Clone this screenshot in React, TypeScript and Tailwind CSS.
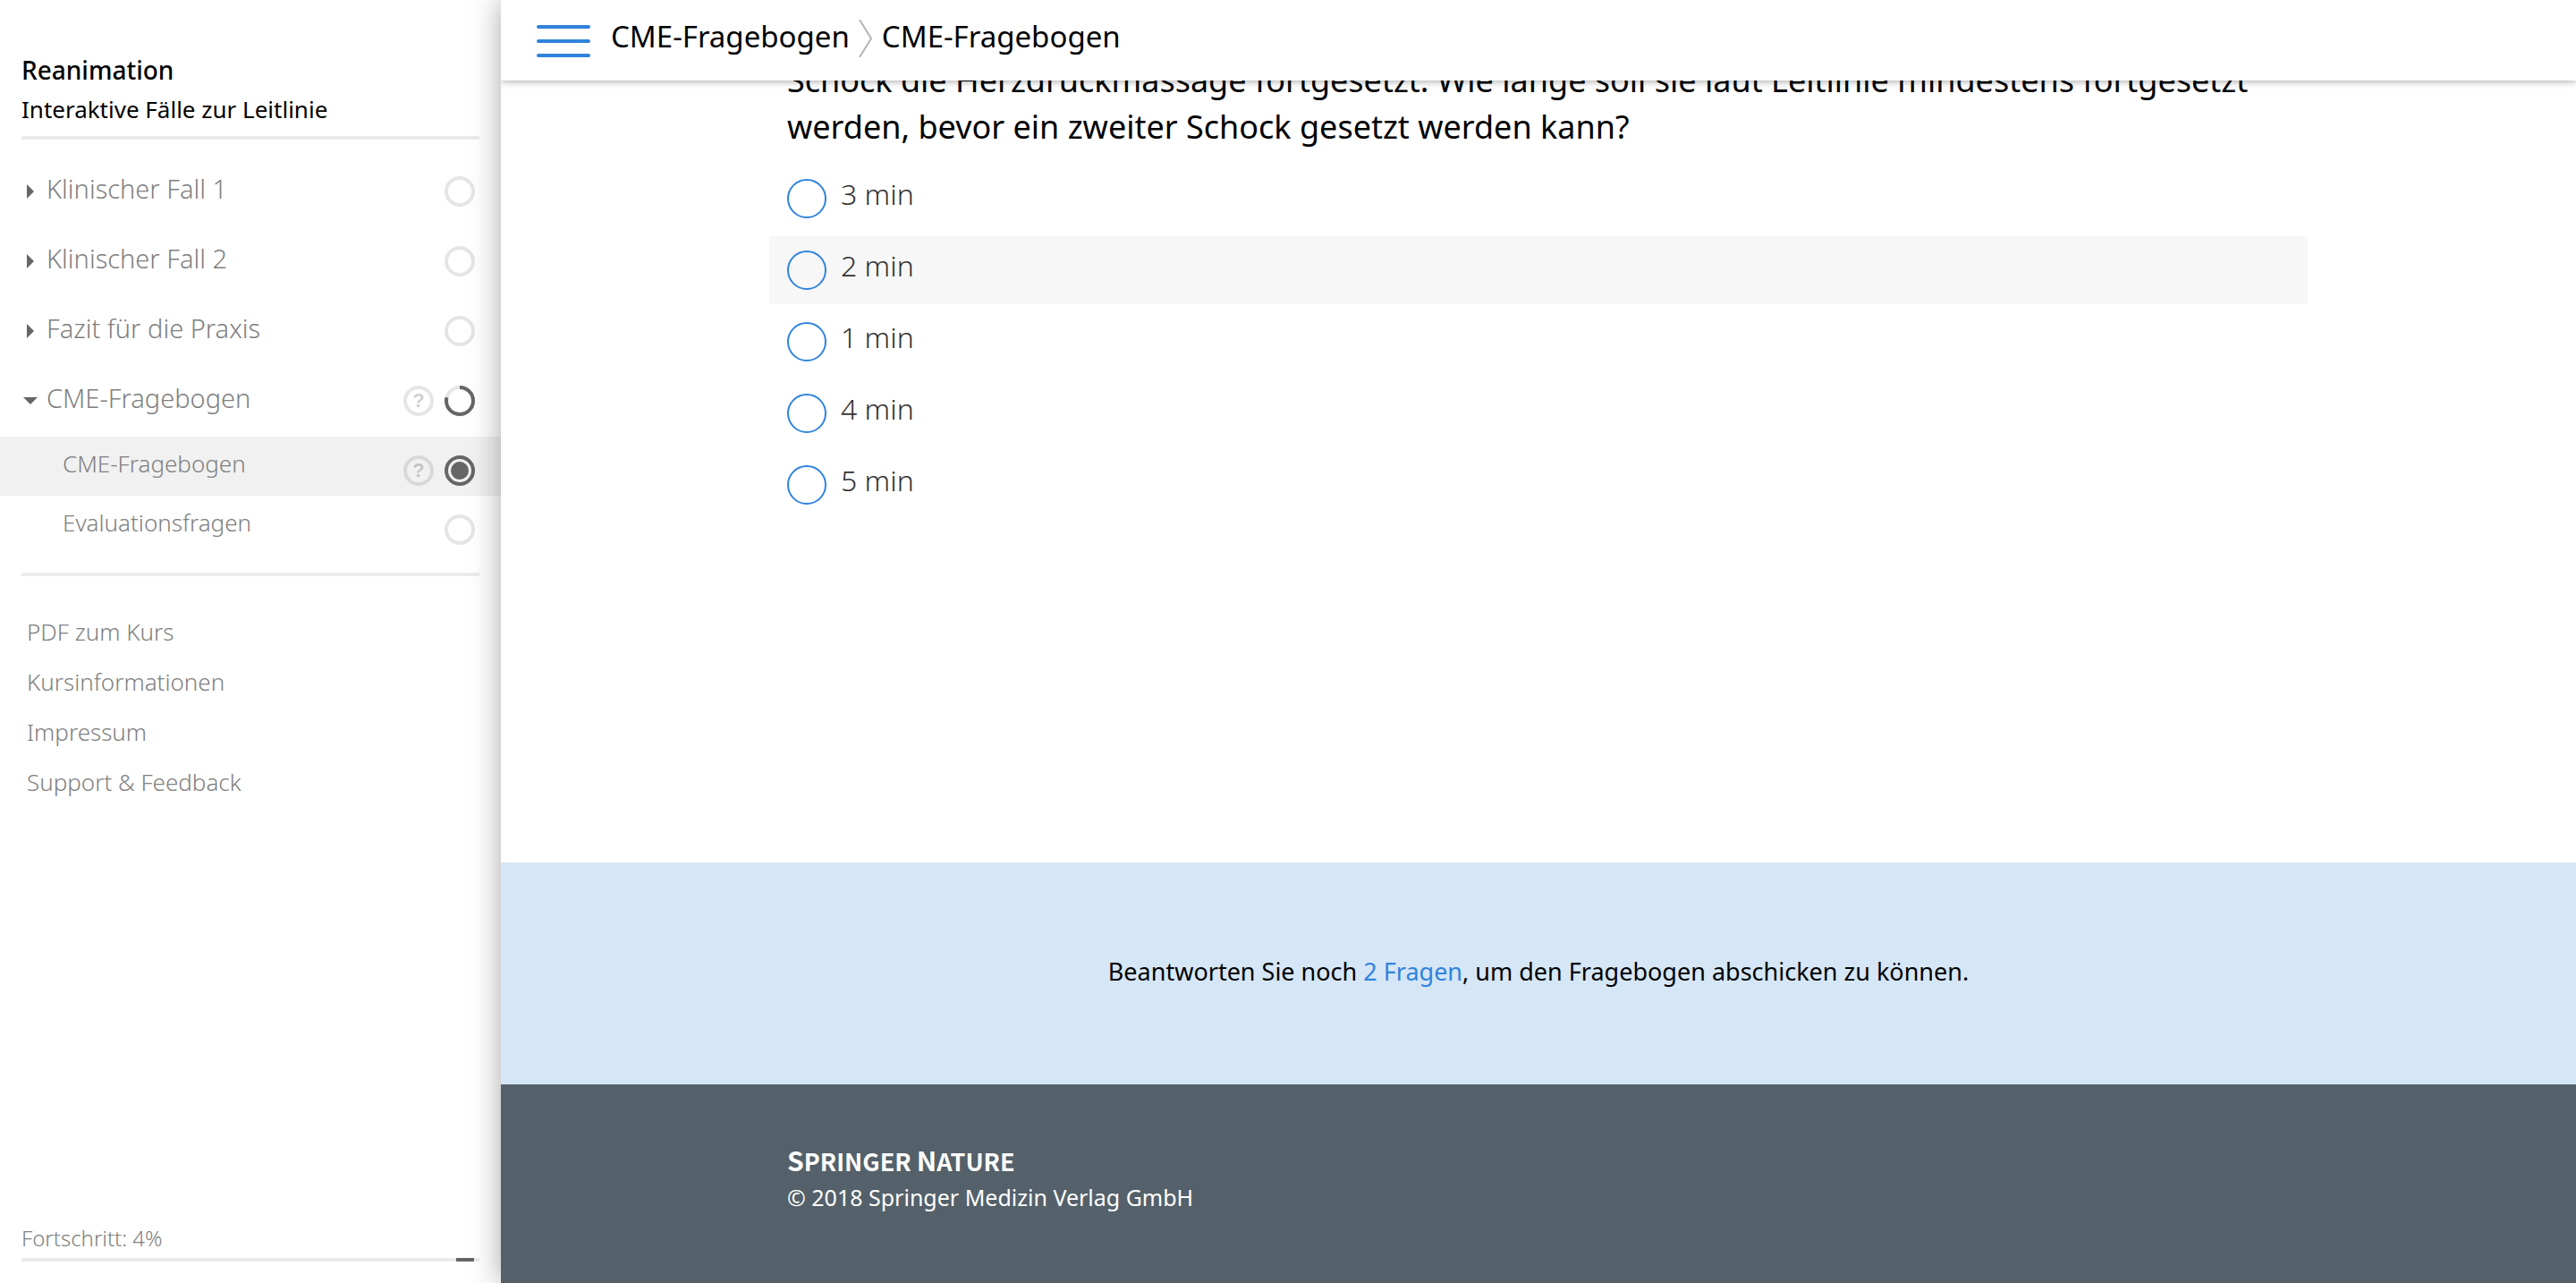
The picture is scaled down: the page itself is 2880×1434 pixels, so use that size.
import { useState } from "react";

type Progress = "open" | "partial" | "active";

function StatusIcon({ state }: { state: Progress }) {
  return (
    <svg className="size-[34px]" viewBox="0 0 34 34" fill="none" aria-hidden="true">
      <circle cx="17" cy="17" r="15" stroke={state === "active" ? "#666" : "#e5e5e5"} strokeWidth="4" />
      {state === "partial" && (
        <circle cx="17" cy="17" r="15" stroke="#666" strokeWidth="4" pathLength="100" strokeDasharray="79 21" transform="rotate(-90 17 17)" />
      )}
      {state === "active" && <circle cx="17" cy="17" r="10" fill="#666" />}
    </svg>
  );
}

function QuestionIcon() {
  return (
    <span className="flex size-[34px] items-center justify-center rounded-full border-4 border-black/10 font-['Liberation_Sans'] text-[22px] leading-none font-bold text-black/20">
      ?
    </span>
  );
}

function Arrow({ open }: { open?: boolean }) {
  return (
    <svg className="mt-[21px] h-[34px] w-4 shrink-0" viewBox="0 0 16 34" fill="#666" aria-hidden="true">
      {open ? <path d="M0 13h16l-8 8z" /> : <path d="M4 9l8 8-8 8z" />}
    </svg>
  );
}

function Icons({ quiz, state }: { quiz?: boolean; state: Progress }) {
  return (
    <span className="mt-[21px] ml-auto flex gap-3">
      {quiz && <QuestionIcon />}
      <StatusIcon state={state} />
    </span>
  );
}

const chapters: { label: string; open?: boolean; quiz?: boolean; state: Progress }[] = [
  { label: "Klinischer Fall 1", state: "open" },
  { label: "Klinischer Fall 2", state: "open" },
  { label: "Fazit für die Praxis", state: "open" },
  { label: "CME-Fragebogen", open: true, quiz: true, state: "partial" },
];

const pages: { label: string; quiz?: boolean; state: Progress }[] = [
  { label: "CME-Fragebogen", quiz: true, state: "active" },
  { label: "Evaluationsfragen", state: "open" },
];

const links = ["PDF zum Kurs", "Kursinformationen", "Impressum", "Support & Feedback"];

const answers = ["3 min", "2 min", "1 min", "4 min", "5 min"];

function Sidebar() {
  return (
    <aside className="flex w-[560px] shrink-0 flex-col bg-white font-light text-[#808080]">
      <div className="mx-6 border-b-4 border-[#ebebeb] pt-[58px] pb-[10px] text-black">
        <h1 className="mb-1 text-[28px] leading-[40px] font-medium">Reanimation</h1>
        <p className="text-[26px] leading-[40px] font-normal">Interaktive Fälle zur Leitlinie</p>
      </div>
      <nav className="pt-5">
        {chapters.map((c) => (
          <button key={c.label} type="button" aria-expanded={!!c.open} className="flex h-[78px] w-full items-start pr-[29px] pl-[26px] text-left">
            <Arrow open={c.open} />
            <span className="ml-[10px] text-[29px] leading-[70px]">{c.label}</span>
            <Icons quiz={c.quiz} state={c.state} />
          </button>
        ))}
        {pages.map((p) => (
          <a
            key={p.label}
            href="#"
            aria-current={p.state === "active" ? "page" : undefined}
            className="flex h-[66px] items-start pr-[29px] pl-[70px] aria-[current=page]:bg-[#f1f1f1]"
          >
            <span className="text-[26px] leading-[60px]">{p.label}</span>
            <Icons quiz={p.quiz} state={p.state} />
          </a>
        ))}
      </nav>
      <div className="mx-6 mt-5 border-t-4 border-[#ebebeb]" />
      <ul className="px-[30px] pt-[34px] text-[26px] leading-[56px]">
        {links.map((l) => (
          <li key={l}>
            <a href="#">{l}</a>
          </li>
        ))}
      </ul>
      <div className="mx-6 mt-auto mb-6">
        <p className="mb-[6px] text-[24px] leading-[32px]">Fortschritt: 4%</p>
        <div className="flex h-1 justify-end bg-[#ebebeb] pr-[6px]">
          <div className="w-[4%] bg-[#666]" />
        </div>
      </div>
    </aside>
  );
}

function TopBar() {
  return (
    <header className="relative z-10 flex h-[90px] shrink-0 items-start bg-white pl-10 text-[33px] leading-[82px] shadow-[0_1px_8px_rgba(0,0,0,0.35)]">
      <button type="button" aria-label="Menü" className="mt-7 mr-[23px] flex w-[60px] flex-col gap-3">
        <span className="h-1 w-full rounded-full bg-[#2f83dc]" />
        <span className="h-1 w-full rounded-full bg-[#2f83dc]" />
        <span className="h-1 w-full rounded-full bg-[#2f83dc]" />
      </button>
      <a href="#">CME-Fragebogen</a>
      <svg className="mx-2.5 mt-[22px] h-[42px] w-4" viewBox="0 0 16 42" fill="none" stroke="#b4b4b4" strokeWidth="2" aria-hidden="true">
        <path d="M1 0L14 21L1 42" />
      </svg>
      <span>CME-Fragebogen</span>
    </header>
  );
}

function Question() {
  const [picked, setPicked] = useState("");
  return (
    <section className="flex-1">
      <fieldset className="mx-auto -mt-[26px] max-w-[1720px]">
        <legend className="mb-4 px-5 text-[36px] leading-[52px]">
          Schock die Herzdruckmassage fortgesetzt. Wie lange soll sie laut Leitlinie mindestens fortgesetzt werden, bevor ein zweiter Schock gesetzt werden kann?
        </legend>
        <div className="flex flex-col gap-1">
          {answers.map((a) => (
            <label key={a} className={`flex h-[76px] items-start gap-4 px-5 text-[32px] leading-[66px] font-light text-[#333] ${a === "2 min" ? "bg-[#f7f7f7]" : ""}`}>
              <input
                type="radio"
                name="answer"
                value={a}
                checked={picked === a}
                onChange={() => setPicked(a)}
                className="mt-4 size-11 appearance-none rounded-full border-2 border-[#2f83dc] checked:bg-[#2f83dc]"
              />
              {a}
            </label>
          ))}
        </div>
      </fieldset>
    </section>
  );
}

export default function App() {
  return (
    <div className="flex h-screen overflow-hidden bg-white font-['Noto_Sans',sans-serif] text-black">
      <Sidebar />
      <main className="relative flex min-w-0 flex-1 flex-col overflow-hidden bg-white shadow-[0_0_32px_rgba(0,0,0,0.35)]">
        <TopBar />
        <Question />
        <p className="bg-[#d5e6f6] pt-[102px] pb-[106px] text-center text-[27px] leading-[40px]">
          Beantworten Sie noch <a href="#" className="text-[#2f83dc]">2 Fragen</a>, um den Fragebogen abschicken zu können.
        </p>
        <footer className="bg-[#54616a] pt-[66px] pb-[76px] text-white">
          <div className="mx-auto max-w-[1720px] px-5 leading-[40px]">
            <p className="font-['Noto_Sans_CJK_SC',sans-serif] text-[27px] font-bold">
              <span className="text-[30px] leading-none">S</span>PRINGER <span className="text-[30px] leading-none">N</span>ATURE
            </p>
            <p className="text-[25px]">© 2018 Springer Medizin Verlag GmbH</p>
          </div>
        </footer>
      </main>
    </div>
  );
}
